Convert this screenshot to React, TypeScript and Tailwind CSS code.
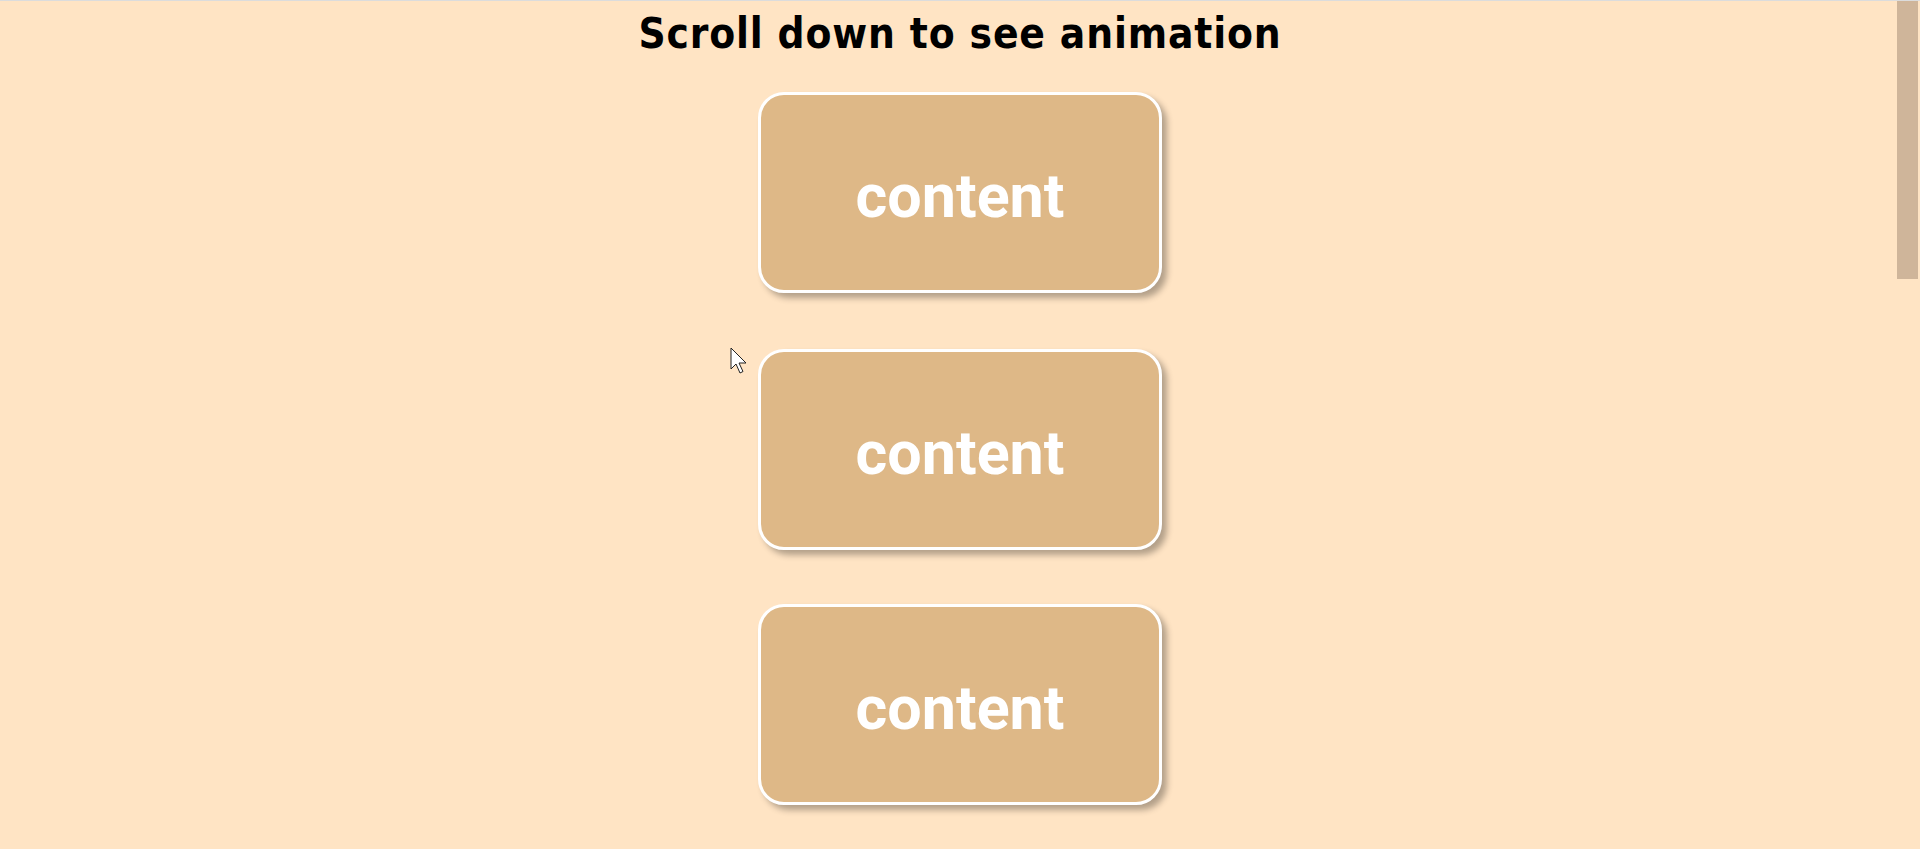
import React from "react";

function Box() {
  return (
    <div className="w-[404px] h-[201px] box-border border-[3px] border-white rounded-[26px] bg-[#deb887] shadow-[5px_5px_6px_rgba(0,0,0,0.3)] flex items-center justify-center">
      <span className="text-white font-bold text-[61px] leading-none [font-family:Roboto,sans-serif] pt-2">
        content
      </span>
    </div>
  );
}

export default function App() {
  return (
    <div className="relative w-full h-[849px] overflow-hidden bg-[#ffe4c4] border-t border-[#dcdcdc]">
      <div className="flex flex-col items-center">
        <h1 className="mt-[9px] text-[42px] leading-[48px] font-bold text-black [font-family:'DejaVu_Sans',sans-serif] [font-stretch:condensed] tracking-[0.85px]">
          Scroll down to see animation
        </h1>
        <div className="mt-[34px]">
          <Box />
        </div>
        <div className="mt-[56px]">
          <Box />
        </div>
        <div className="mt-[54px]">
          <Box />
        </div>
      </div>
      <div className="absolute right-[2px] top-0 w-[21px] h-[278px] bg-[#cfb59a]" />
      <svg className="absolute left-[730px] top-[346px]" width="22" height="30" viewBox="0 0 22 30">
        <path d="M1 1 L1 22 L6 17 L10 26 L13 24.5 L9 16 L16 16 Z" fill="white" stroke="#222" strokeWidth="1" strokeLinejoin="round" />
      </svg>
    </div>
  );
}
